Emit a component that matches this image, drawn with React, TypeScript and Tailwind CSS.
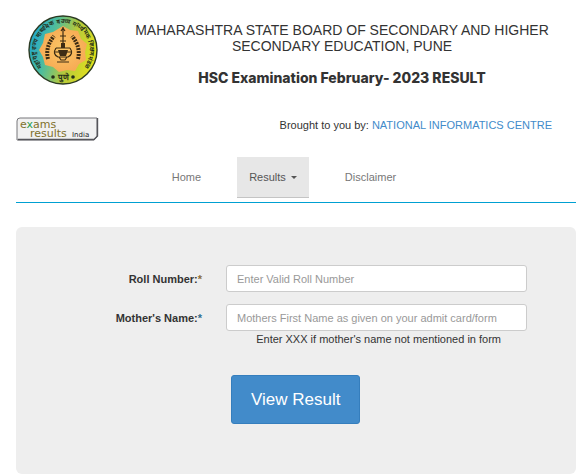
import { useState } from "react";

const navItems = [
  { label: "Home", caret: false },
  { label: "Results", caret: true },
  { label: "Disclaimer", caret: false },
];

function BoardLogo() {
  return (
    <svg viewBox="0 0 70 72" className="w-[70px] h-[72px] shrink-0" role="img" aria-label="Board emblem">
      <defs>
        <linearGradient id="ring" x1="0" y1="0.35" x2="1" y2="0.65">
          <stop offset="0" stopColor="#1fa6cf" />
          <stop offset="0.3" stopColor="#4fbd9c" />
          <stop offset="0.6" stopColor="#b5c93c" />
          <stop offset="1" stopColor="#e6e21a" />
        </linearGradient>
        <radialGradient id="core">
          <stop offset="0" stopColor="#fbc765" />
          <stop offset="1" stopColor="#f7ab55" />
        </radialGradient>
        <path id="arc" d="M19 58 A27 27 0 1 1 51 58" />
      </defs>
      <circle cx="35" cy="36" r="34" fill="url(#ring)" stroke="#2c3a22" strokeWidth="1.4" />
      <path
        d="M35 12 L42 16 L50 17 L53 25 L59 30 L57 38 L58 46 L51 50 L47 57 L39 56 L31 58 L25 53 L17 51 L15 43 L11 36 L15 29 L17 20 L25 18 Z"
        fill="url(#core)"
      />
      <text fill="#26301a" fontSize="6" fontWeight="700" textAnchor="middle">
        <textPath href="#arc" startOffset="50%">महाराष्ट्र राज्य माध्यमिक व उच्च माध्यमिक शिक्षण मंडळ</textPath>
      </text>
      <text x="35" y="66" textAnchor="middle" fill="#26301a" fontSize="8" fontWeight="700">पुणे</text>
      <circle cx="25" cy="63" r="1.8" fill="#26301a" />
      <circle cx="45" cy="63" r="1.8" fill="#26301a" />
      <g stroke="#3d2c14" fill="none" strokeWidth="1.2">
        <path d="M35 13 V33 M33 17 L35 14 L37 17 M32 22 H38 M32 27 H38" />
        <path d="M28 34 H42 M28 34 Q24 40 30 43 H40 Q46 40 42 34 M26 38 H44 M31 43 L33 46 H37 L39 43 M29 48 H41" />
        <path d="M20 45 Q17 33 26 22 M50 45 Q53 33 44 22" strokeWidth="4" strokeDasharray="2 1" />
      </g>
      <path d="M30 36 H40 L38 42 H32 Z M33 29 H37 V34 H33 Z" fill="#3d2c14" />
    </svg>
  );
}

function ExamsLogo() {
  return (
    <svg viewBox="0 0 82 24" className="w-[82px] h-6 shrink-0 overflow-visible" role="img" aria-label="Exams Results India">
      <path d="M1 4 Q1 1 4 1 H81 V20 L78 23 H1 Z" fill="#f1f1f1" stroke="#77777b" />
      <path d="M2 22.5 H78 L81.5 19 V1" fill="none" stroke="#55555a" strokeWidth="1.4" />
      <g fontFamily="'DejaVu Sans', sans-serif">
        <text x="4" y="11" fontSize="11" fill="#80702c">e<tspan fill="#2b9c4c">x</tspan>ams</text>
        <text x="14" y="20" fontSize="11" fill="#80702c">results</text>
        <text x="56" y="20" fontSize="7" fill="#222222">India</text>
      </g>
    </svg>
  );
}

export default function App() {
  const [active, setActive] = useState("Results");
  const [roll, setRoll] = useState("");
  const [mother, setMother] = useState("");

  const inputClass =
    "w-full h-[27px] px-2.5 bg-white border border-[#cccccc] rounded-[3px] text-[11px] text-[#555555] placeholder:text-[#999999] placeholder:opacity-100 outline-none focus:border-[#66afe9]";

  return (
    <div className="bg-white pl-4 pr-1 pt-3.5 pb-0.5 font-['Liberation_Sans',Arial,sans-serif] text-[11px] leading-4 text-[#333333]">
      {/* Header */}
      <header>
        <div className="flex items-start pl-3">
          <BoardLogo />
          <div className="flex-1 pl-2.5 pt-2 text-center">
            <h1 className="text-[14px] leading-4">
              MAHARASHTRA STATE BOARD OF SECONDARY AND HIGHER SECONDARY EDUCATION, PUNE
            </h1>
            <h2 className="mt-4 font-[Inter,sans-serif] text-[14px] leading-4 font-extrabold">
              HSC Examination February- 2023 RESULT
            </h2>
          </div>
        </div>
        <div className="mt-[31px] flex items-start justify-between pr-6">
          <ExamsLogo />
          <p>
            Brought to you by:{" "}
            <a href="#nic" className="text-[#428bca] hover:underline">NATIONAL INFORMATICS CENTRE</a>
          </p>
        </div>
      </header>

      {/* Navigation */}
      <nav className="mt-4 pb-1 pr-6 flex justify-center gap-6 border-b border-[#00a0d2]">
        {navItems.map(item => (
          <a
            key={item.label}
            href={`#${item.label.toLowerCase()}`}
            onClick={() => setActive(item.label)}
            className={`flex items-center h-[41px] px-3 border-b ${
              active === item.label
                ? "bg-[#e7e7e7] border-[#c4c4c4] text-[#555555]"
                : "border-transparent text-[#777777]"
            }`}
          >
            {item.label}
            {item.caret && (
              <span className="ml-[5px] border-x-3 border-t-3 border-x-transparent border-t-current" />
            )}
          </a>
        ))}
      </nav>

      {/* Result form */}
      <form
        className="mt-6 pt-[38px] pb-[50px] rounded-md bg-[#eeeeee]"
        onSubmit={e => e.preventDefault()}
      >
        <div className="flex items-center pr-[49px]">
          <label htmlFor="roll" className="w-[186px] text-right font-bold">
            Roll Number:<span className="text-[#8a6d3b]">*</span>
          </label>
          <div className="flex-1 ml-6">
            <input
              id="roll"
              value={roll}
              onChange={e => setRoll(e.target.value)}
              placeholder="Enter Valid Roll Number"
              className={inputClass}
            />
          </div>
        </div>
        <div className="mt-3 flex items-center pr-[49px]">
          <label htmlFor="mother" className="w-[186px] text-right font-bold">
            Mother's Name:<span className="text-[#31708f]">*</span>
          </label>
          <div className="flex-1 ml-6">
            <input
              id="mother"
              value={mother}
              onChange={e => setMother(e.target.value)}
              placeholder="Mothers First Name as given on your admit card/form"
              className={inputClass}
            />
          </div>
        </div>
        <p className="pr-[75px] text-right">Enter XXX if mother's name not mentioned in form</p>
        <div className="mt-7 ml-[215px]">
          <button
            type="submit"
            className="h-[49px] px-[19px] rounded-[3px] border border-[#357ebd] bg-[#428bca] hover:bg-[#3276b1] text-[17px] text-white"
          >
            View Result
          </button>
        </div>
      </form>
    </div>
  );
}
